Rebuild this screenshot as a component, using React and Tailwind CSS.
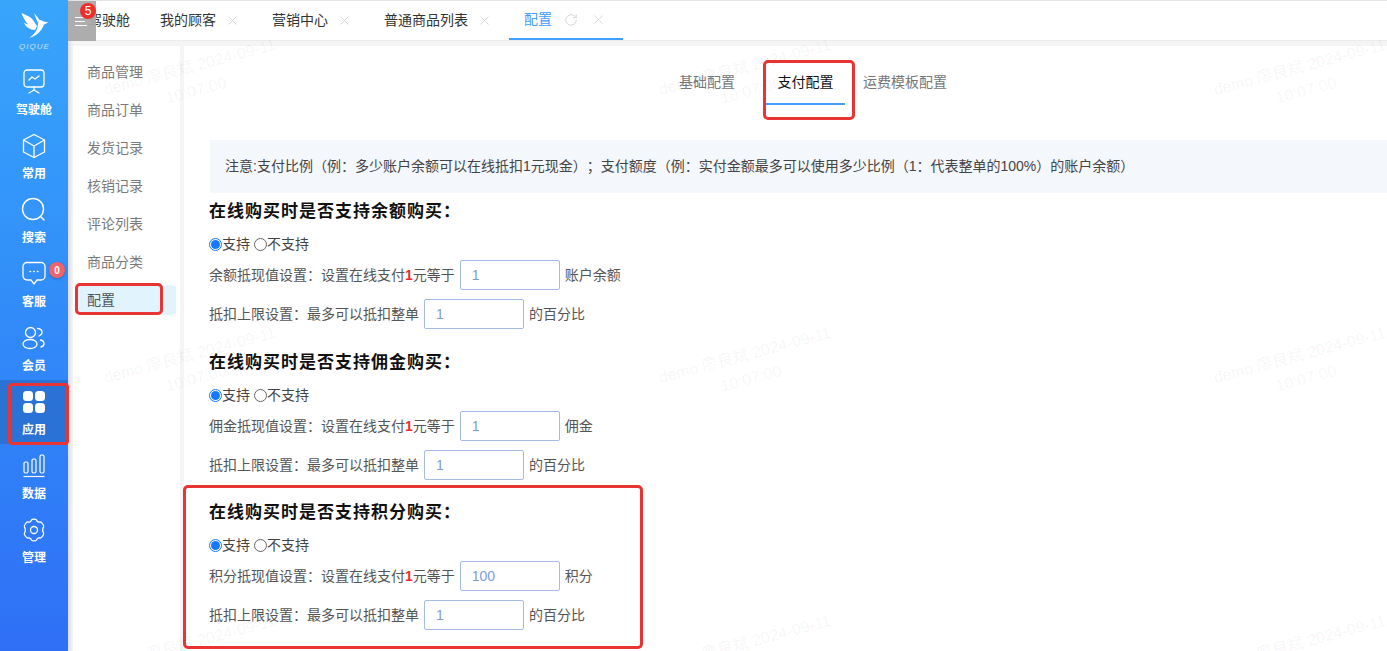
import React from "react";
import { RotateCw, X } from "lucide-react";

const FONT = "font-['Liberation_Sans','Noto_Sans_CJK_SC',sans-serif]";

const Logo = () => (
  <svg width="28" height="27" viewBox="0 0 28 27" fill="#fff">
    <path d="M0.5 1 C5 3.5 9 4 12 8 L16 14 L14 18 C9 18 5 15 3 11 L7 12.5 C4 9 2 5 0.5 1Z" />
    <path d="M13 1 C15 3 17 6 18.5 8 L16.5 10.5 C15.5 7 14 4 13 1Z" />
    <path d="M18 8 C20 7.5 22 9 23 9.5 L27.5 10.5 L23 12.5 C21 19 15 24 8.5 26 C12 23 15.5 20 16.5 15 C17 12 17 10 18 8Z" />
  </svg>
);

const IconScreen = () => (
  <svg width="24" height="26" viewBox="0 0 24 26" fill="none" stroke="#fff" strokeWidth="1.3" strokeLinecap="round" strokeLinejoin="round">
    <rect x="2" y="1" width="20" height="17" rx="3" />
    <path d="M7 11 L10 8 L13 10 L17 7" />
    <path d="M12 18 V21 M7 24 L12 21 L17 24" />
  </svg>
);
const IconBox = () => (
  <svg width="24" height="26" viewBox="0 0 24 26" fill="none" stroke="#fff" strokeWidth="1.3" strokeLinejoin="round">
    <path d="M12 1.5 L22.5 7 V19 L12 24.5 L1.5 19 V7Z" />
    <path d="M1.5 7 L12 13 L22.5 7 M12 13 V24.5" />
  </svg>
);
const IconSearch = () => (
  <svg width="26" height="26" viewBox="0 0 26 26" fill="none" stroke="#fff" strokeWidth="1.4" strokeLinecap="round">
    <circle cx="12" cy="12" r="10.5" />
    <path d="M20 20 L23 23" />
  </svg>
);
const IconChat = () => (
  <svg width="24" height="26" viewBox="0 0 24 26" fill="none" stroke="#fff" strokeWidth="1.3" strokeLinejoin="round">
    <path d="M5 1.5 H19 A4 4 0 0 1 23 5.5 V15 A4 4 0 0 1 19 19 H15 L12 23 L9 19 H5 A4 4 0 0 1 1 15 V5.5 A4 4 0 0 1 5 1.5Z" />
    <path d="M8 10.5 H8.6 M11.7 10.5 H12.3 M15.4 10.5 H16" strokeLinecap="round" />
  </svg>
);
const IconUsers = () => (
  <svg width="24" height="24" viewBox="0 0 24 24" fill="none" stroke="#fff" strokeWidth="1.3" strokeLinecap="round">
    <circle cx="8.5" cy="6.5" r="5" />
    <ellipse cx="8" cy="18" rx="7" ry="4.5" />
    <path d="M15.5 2.5 C19 2.5 20.5 5 20 7 C19.6 8.5 18.6 9.5 17 10" />
    <path d="M18.5 14 C21 14.5 22 16 22 17.5 C22 19 21 20.5 19 21" />
  </svg>
);
const IconGrid = () => (
  <svg width="22" height="22" viewBox="0 0 22 22" fill="#fff">
    <rect x="0" y="0" width="10" height="10" rx="3.5" />
    <rect x="12" y="0" width="10" height="10" rx="3.5" />
    <rect x="0" y="12" width="10" height="10" rx="3.5" />
    <rect x="12" y="12" width="10" height="10" rx="3.5" />
  </svg>
);
const IconBars = () => (
  <svg width="22" height="24" viewBox="0 0 22 24" fill="none" stroke="#fff" strokeWidth="1.2">
    <rect x="1" y="8" width="4" height="11" rx="1.5" />
    <rect x="9" y="5" width="4" height="14" rx="1.5" />
    <rect x="17" y="1" width="4" height="18" rx="1.5" />
    <path d="M0.5 22.5 H21.5" />
  </svg>
);
const IconGear = () => (
  <svg width="24" height="24" viewBox="0 0 24 24" fill="none" stroke="#fff" strokeWidth="1.3" strokeLinejoin="round">
    <path d="M9.5 2 C10 0.8 14 0.8 14.5 2 C15 3.6 16.5 4.4 18 4 C19.5 3.6 22.5 8 21.5 9.2 C20.4 10.4 20.4 13.6 21.5 14.8 C22.5 16 19.5 20.4 18 20 C16.5 19.6 15 20.4 14.5 22 C14 23.2 10 23.2 9.5 22 C9 20.4 7.5 19.6 6 20 C4.5 20.4 1.5 16 2.5 14.8 C3.6 13.6 3.6 10.4 2.5 9.2 C1.5 8 4.5 3.6 6 4 C7.5 4.4 9 3.6 9.5 2Z" />
    <circle cx="12" cy="12" r="3.5" />
  </svg>
);

const navItems = [
  { label: "驾驶舱", icon: IconScreen },
  { label: "常用", icon: IconBox },
  { label: "搜索", icon: IconSearch },
  { label: "客服", icon: IconChat, badge: "0" },
  { label: "会员", icon: IconUsers },
  { label: "应用", icon: IconGrid, active: true },
  { label: "数据", icon: IconBars },
  { label: "管理", icon: IconGear },
];

const subItems = ["商品管理", "商品订单", "发货记录", "核销记录", "评论列表", "商品分类", "配置"];

const tabs = [
  { label: "我的顾客", w: "w-[112px]" },
  { label: "营销中心", w: "w-[112px]" },
  { label: "普通商品列表", w: "w-[140px]" },
];

const sections = [
  { title: "在线购买时是否支持余额购买：", name: "余额抵现值设置：", value: "1", unit: "账户余额", h: "h-[151px]" },
  { title: "在线购买时是否支持佣金购买：", name: "佣金抵现值设置：", value: "1", unit: "佣金", h: "h-[150px]" },
  { title: "在线购买时是否支持积分购买：", name: "积分抵现值设置：", value: "100", unit: "积分", h: "h-[147px]" },
];

const marks = [
  "left-[103px] top-[55px]",
  "left-[658px] top-[55px]",
  "left-[1213px] top-[55px]",
  "left-[103px] top-[343px]",
  "left-[658px] top-[343px]",
  "left-[1213px] top-[343px]",
  "left-[103px] top-[631px]",
  "left-[658px] top-[631px]",
  "left-[1213px] top-[631px]",
];

const Input = ({ value }) => (
  <div className="w-[100px] h-[30px] border border-[#a3bbe5] rounded-[2px] flex items-center pl-[11px] text-[14px] text-[#7f9bd0] bg-white">
    {value}
  </div>
);

const Radio = ({ checked, label }) => (
  <span className="inline-flex items-center">
    {checked ? (
      <span className="w-[13px] h-[13px] rounded-full border border-[#1677ff] flex items-center justify-center">
        <span className="w-[9px] h-[9px] rounded-full bg-[#1677ff]" />
      </span>
    ) : (
      <span className="w-[13px] h-[13px] rounded-full border border-[#666]" />
    )}
    <span className="text-[14px] text-[#444]">{label}</span>
  </span>
);

const Section = ({ s }) => (
  <div className={`text-[14px] text-[#555] ${s.h}`}>
    <div className="h-[22px] leading-[22px] text-[17px] font-bold text-[#111] tracking-[1px] translate-y-[1px]">{s.title}</div>
    <div className="flex items-center gap-[4px] h-[22px] mt-[11px]">
      <Radio checked label="支持" />
      <Radio label="不支持" />
    </div>
    <div className="flex items-center h-[30px] mt-[5px]">
      <span>{s.name}设置在线支付</span>
      <span className="font-bold text-[#ee2d2d]">1</span>
      <span>元等于</span>
      <span className="w-[5px]" />
      <Input value={s.value} />
      <span className="ml-[5px]">{s.unit}</span>
    </div>
    <div className="flex items-center h-[30px] mt-[9px]">
      <span>抵扣上限设置：最多可以抵扣整单</span>
      <span className="w-[5px]" />
      <Input value="1" />
      <span className="ml-[5px]">的百分比</span>
    </div>
  </div>
);

export default function App() {
  return (
    <div className={`${FONT} relative flex w-[1387px] h-[651px] overflow-hidden bg-[#f5f5f5]`}>
      {/* Left nav */}
      <div className="w-[68px] shrink-0 flex flex-col bg-gradient-to-b from-[#38a5fb] to-[#2f6ff6] shadow-[2px_0_4px_rgba(0,0,0,0.12)] z-10">
        <div className="h-[60px] flex flex-col items-center pt-[12px] pl-[1px]">
          <Logo />
          <span className="mt-[3px] text-[8px] leading-[10px] italic tracking-[1px] text-white/70">QIQUE</span>
        </div>
        {navItems.map((item) => (
          <div
            key={item.label}
            className={`relative h-[64px] flex flex-col items-center pt-[9px] ${item.active ? "bg-[#2a72d6]" : ""}`}
          >
            <div className="h-[26px] flex items-center justify-center">
              <item.icon />
            </div>
            <div className="mt-[7px] text-[12px] leading-[16px] font-bold text-white">{item.label}</div>
            {item.badge && (
              <span className="absolute left-[49px] top-[10px] w-[16px] h-[16px] rounded-full bg-[#f0636b] text-white text-[10px] font-bold flex items-center justify-center shadow-[0_1px_3px_rgba(0,0,0,0.25)]">
                {item.badge}
              </span>
            )}
          </div>
        ))}
      </div>

      {/* Main */}
      <div className="flex-1 min-w-0 flex flex-col">
        <div className="h-[41px] shrink-0 flex items-stretch pl-[5px] bg-white border-t border-[#e4e4e4] border-b-[#ececec] border-b">
          <div className="w-[72px] pl-[15px] flex items-center text-[14px] text-[#333]">驾驶舱</div>
          {tabs.map((t) => (
            <div key={t.label} className={`${t.w} pl-[15px] flex items-center text-[14px] text-[#333]`}>
              <span>{t.label}</span>
              <X className="ml-[9px] w-[15px] h-[15px] text-[#cfcfcf]" strokeWidth={1.25} />
            </div>
          ))}
          <div className="w-[114px] pl-[15px] flex items-center text-[14px] text-[#409eff] border-b-2 border-[#409eff]">
            <span>配置</span>
            <RotateCw className="ml-[12px] w-[14px] h-[14px] text-[#c9c9c9]" strokeWidth={1.25} />
            <X className="ml-[13px] w-[15px] h-[15px] text-[#cfcfcf]" strokeWidth={1.25} />
          </div>
        </div>

        <div className="flex-1 min-h-0 flex pt-[5px] pl-[5px]">
          {/* Sub menu */}
          <div className="w-[107px] shrink-0 bg-white pt-[7px] pl-[2px] pr-[3px]">
            {subItems.map((label) => (
              <div
                key={label}
                className={`h-[38px] flex items-center pl-[12px] text-[14px] ${
                  label === "配置" ? "text-[#555]" : "text-[#7a7a7a]"
                }`}
              >
                {label === "配置" ? (
                  <div className="-ml-[12px] pl-[12px] w-[101px] h-[30px] flex items-center rounded-[4px] bg-[#e1f3fd]">{label}</div>
                ) : (
                  label
                )}
              </div>
            ))}
          </div>

          {/* Content */}
          <div className="flex-1 min-w-0 ml-[4px] bg-white pl-[26px]">
            <div className="h-[94px] flex items-start pt-[15px] pl-[469px] text-[14px]">
              <div className="h-[44px] pt-[11px] text-[#777]">基础配置</div>
              <div className="h-[44px] w-[79px] ml-[31px] flex justify-center pt-[11px] text-[#111] border-b-2 border-[#409eff]">支付配置</div>
              <div className="h-[44px] pt-[11px] text-[#777] ml-[18px]">运费模板配置</div>
            </div>
            <div className="h-[53px] flex items-center pl-[15px] bg-[#f4f7fc] text-[14px] text-[#444] whitespace-nowrap [text-spacing-trim:space-all]">
              注意:支付比例（例：多少账户余额可以在线抵扣1元现金）；支付额度（例：实付金额最多可以使用多少比例（1：代表整单的100%）的账户余额）
            </div>
            <div className="pt-[7px] -ml-[1px]">
              {sections.map((s) => (
                <Section key={s.name} s={s} />
              ))}
            </div>
          </div>
        </div>
      </div>

      {/* Menu toggle lying over the first tab */}
      <div className="absolute left-[68px] top-[1px] w-[28px] h-[40px] bg-[#a9a9a9]/95 flex items-center justify-start pl-[7px] z-20">
        <div className="flex flex-col gap-[3px]">
          <span className="block w-[10px] h-[1px] bg-white" />
          <span className="block w-[10px] h-[1px] bg-white" />
          <span className="block w-[12px] h-[1px] bg-white" />
        </div>
      </div>
      <span className="absolute left-[80px] top-[3px] w-[16px] h-[16px] rounded-full bg-[#ee2d2d] text-white text-[12px] font-medium flex items-center justify-center z-30">5</span>

      {/* Red annotation boxes */}
      <div className="absolute left-[8px] top-[383px] w-[61px] h-[62px] border-[3px] border-[#e93434] rounded-[4px] z-30" />
      <div className="absolute left-[75px] top-[283px] w-[88px] h-[32px] border-[3px] border-[#e93434] rounded-[5px] z-30" />
      <div className="absolute left-[763px] top-[60px] w-[92px] h-[60px] border-[3px] border-[#e93434] rounded-[5px] z-30" />
      <div className="absolute left-[183px] top-[485px] w-[460px] h-[164px] border-[3px] border-[#e93434] rounded-[5px] z-30" />

      {/* Watermarks */}
      {marks.map((pos) => (
        <div
          key={pos}
          className={`absolute ${pos} w-[180px] whitespace-nowrap text-center text-[16px] leading-[24px] text-black/[0.05] -rotate-[15deg] pointer-events-none z-40`}
        >
          demo 廖良斌 2024-09-11
          <br />
          10:07:00
        </div>
      ))}
    </div>
  );
}
